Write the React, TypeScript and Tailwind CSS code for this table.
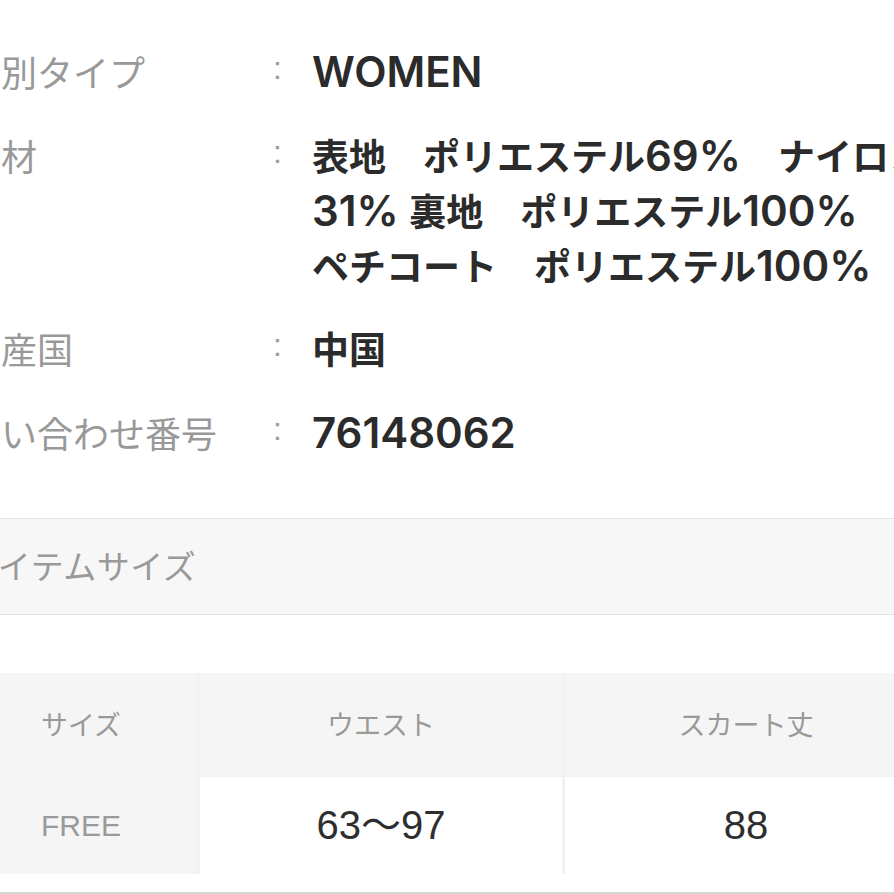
import React from "react";

type Seg = { t: string; latin?: boolean };

interface SpecRow {
  label: string;
  shift?: string;
  lines: Seg[][];
}

const jp = "font-['Noto_Sans_CJK_JP',sans-serif]";

const rows: SpecRow[] = [
  { label: "性別タイプ", lines: [[{ t: "WOMEN", latin: true }]] },
  {
    label: "素材",
    lines: [
      [
        { t: "表地　ポリエステル" },
        { t: "69%", latin: true },
        { t: "　ナイロン" },
      ],
      [
        { t: "31% ", latin: true },
        { t: "裏地　ポリエステル" },
        { t: "100%", latin: true },
      ],
      [
        { t: "ペチコート　ポリエステル" },
        { t: "100%", latin: true },
      ],
    ],
  },
  { label: "原産国", lines: [[{ t: "中国" }]] },
  { label: "お問い合わせ番号", shift: "-ml-[36px]", lines: [[{ t: "76148062", latin: true }]] },
];

const Value: React.FC<{ line: Seg[] }> = ({ line }) => (
  <div className={`${jp} h-[55px] text-[37px] leading-[55px] whitespace-nowrap`}>
    {line.map((s, i) =>
      s.latin ? (
        <span key={i} className="font-['Inter','Liberation_Sans',sans-serif] text-[42px] leading-none font-semibold">
          {s.t}
        </span>
      ) : (
        <span key={i} className="leading-none font-semibold">
          {s.t}
        </span>
      )
    )}
  </div>
);

export default function App() {
  return (
    <div className="w-[894px] h-[894px] overflow-hidden bg-white">
      <div className="-ml-[35px] w-[1000px] pt-[44px]">
        {/* spec rows */}
        <div className="flex flex-col gap-[28.5px]">
          {rows.map((row) => (
            <div key={row.label} className="flex items-start leading-[55px]">
              <div className={`${jp} w-[300px] shrink-0 text-[36px] text-[#999999] whitespace-nowrap`}>
                <div className={row.shift}>{row.label}</div>
              </div>
              <div className="w-[25px] shrink-0 text-center font-['Liberation_Sans',sans-serif] text-[32px] text-[#9c9c9c] relative -top-[3px]">:</div>
              <div className="ml-[22px] text-[#2b2b2b]">
                {row.lines.map((line, i) => (
                  <Value key={i} line={line} />
                ))}
              </div>
            </div>
          ))}
        </div>

        {/* section header */}
        <div className="mt-[58px] h-[97px] border-y border-[#e3e3e3] bg-[#f7f7f7] flex items-center pl-[1px]">
          <span className={`${jp} text-[33px] tracking-[0.5px] text-[#999999]`}>アイテムサイズ</span>
        </div>

        {/* size table */}
        <div className="mt-[58px] grid grid-cols-[232px_362px_362px] grid-rows-[103px_97px] gap-x-[3px] gap-y-[1px] bg-[#f2f2f2] w-fit">
          <div className={`${jp} bg-[#f5f5f5] flex items-center justify-center text-[27px] text-[#999999]`}>サイズ</div>
          <div className={`${jp} bg-[#f5f5f5] flex items-center justify-center text-[27px] text-[#999999]`}>ウエスト</div>
          <div className={`${jp} bg-[#f5f5f5] flex items-center justify-center text-[27px] text-[#999999]`}>スカート丈</div>
          <div className="bg-[#f5f5f5] flex items-center justify-center font-['Liberation_Sans',sans-serif] text-[30px] text-[#999999]">FREE</div>
          <div className="bg-white flex items-center justify-center font-['Liberation_Sans','Noto_Sans_CJK_JP',sans-serif] text-[40px] text-[#2e2e2e]">63〜97</div>
          <div className="bg-white flex items-center justify-center font-['Liberation_Sans',sans-serif] text-[40px] text-[#2e2e2e]">88</div>
        </div>

        <div className="mt-[18px] h-[2px] bg-[#d6d6d6]" />
      </div>
    </div>
  );
}
